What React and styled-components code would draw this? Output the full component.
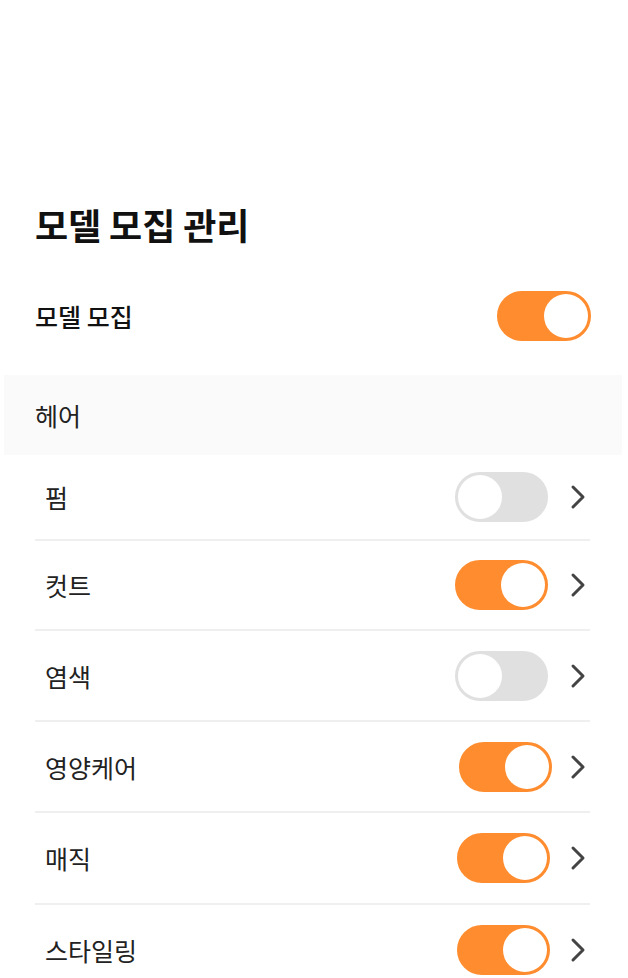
import React from 'react';
import styled, { createGlobalStyle } from 'styled-components';

const GlobalStyle = createGlobalStyle`
    body {
        margin: 0;
        background: #fff;
        font-family: "Noto Sans CJK KR", "Noto Sans", sans-serif;
        color: #1a1a1a;
    }
`

const Page = styled.div`
    width: 628px;
    min-height: 978px;
    display: flex;
    flex-direction: column;
    overflow: hidden;
`

const TopBar = styled.div`
    height: 130px;
`

const Title = styled.h1`
    margin: 70px 0 0;
    padding: 0 35px;
    font-size: 36px;
    font-weight: 700;
    letter-spacing: -0.1px;
    line-height: 48px;
    color: #111;
`

const MasterRow = styled.div`
    display: flex;
    align-items: center;
    justify-content: space-between;
    height: 50px;
    margin: 43px 37px 34px 35px;
`

const MasterLabel = styled.div`
    font-size: 25px;
    font-weight: 500;
    color: #111;
`

const Section = styled.div`
    margin: 0 6px 0 4px;
    height: 80px;
    display: flex;
    align-items: center;
    padding-left: 31px;
    background: #fafafa;
    font-size: 25px;
    color: #222;
`

const List = styled.div`
    padding: 0 38px 0 35px;
`

const Row = styled.div`
    display: flex;
    align-items: center;
    height: ${p => p.$h}px;
    padding-left: 10px;
    border-bottom: ${p => (p.$last ? 'none' : '2px solid #efefef')};
`

const RowLabel = styled.div`
    flex: 1;
    font-size: 25px;
    color: #222;
`

const Track = styled.div`
    box-sizing: border-box;
    width: ${p => p.$w || 93}px;
    height: 50px;
    border-radius: 25px;
    border: 3px solid ${p => (p.$on ? '#ff8c2e' : '#e0e0e0')};
    background: ${p => (p.$on ? '#ff8c2e' : '#e0e0e0')};
    display: flex;
    justify-content: ${p => (p.$on ? 'flex-end' : 'flex-start')};
    margin-right: ${p => p.$mr || 0}px;
`

const Knob = styled.div`
    width: 44px;
    height: 44px;
    border-radius: 50%;
    background: #fff;
`

const Chevron = styled.svg`
    width: 16px;
    height: 26px;
    margin-left: 18px;
    margin-right: 4px;
    flex-shrink: 0;
`

function Toggle({ on, w, mr }) {
    return (
        <Track $on={on} $w={w} $mr={mr}>
            <Knob />
        </Track>
    )
}

const items = [
    { label: '펌', on: false, h: 84, mr: 4 },
    { label: '컷트', on: true, h: 88, mr: 4 },
    { label: '염색', on: false, h: 89, mr: 4 },
    { label: '영양케어', on: true, h: 89, mr: 0 },
    { label: '매직', on: true, h: 90, mr: 2 },
    { label: '스타일링', on: true, h: 90, mr: 2, last: true },
]

function App() {
    return (
        <Page>
            <GlobalStyle />
            <TopBar />
            <Title>모델 모집 관리</Title>
            <MasterRow>
                <MasterLabel>모델 모집</MasterLabel>
                <Toggle on w={94} />
            </MasterRow>
            <Section>헤어</Section>
            <List>
                {items.map(it => (
                    <Row key={it.label} $h={it.h} $last={it.last}>
                        <RowLabel>{it.label}</RowLabel>
                        <Toggle on={it.on} mr={it.mr} />
                        <Chevron viewBox="0 0 16 26">
                            <path d="M3 3 L13 13 L3 23" fill="none" stroke="#444" strokeWidth="3" strokeLinecap="round" strokeLinejoin="round" />
                        </Chevron>
                    </Row>
                ))}
            </List>
        </Page>
    )
}

export default App;
